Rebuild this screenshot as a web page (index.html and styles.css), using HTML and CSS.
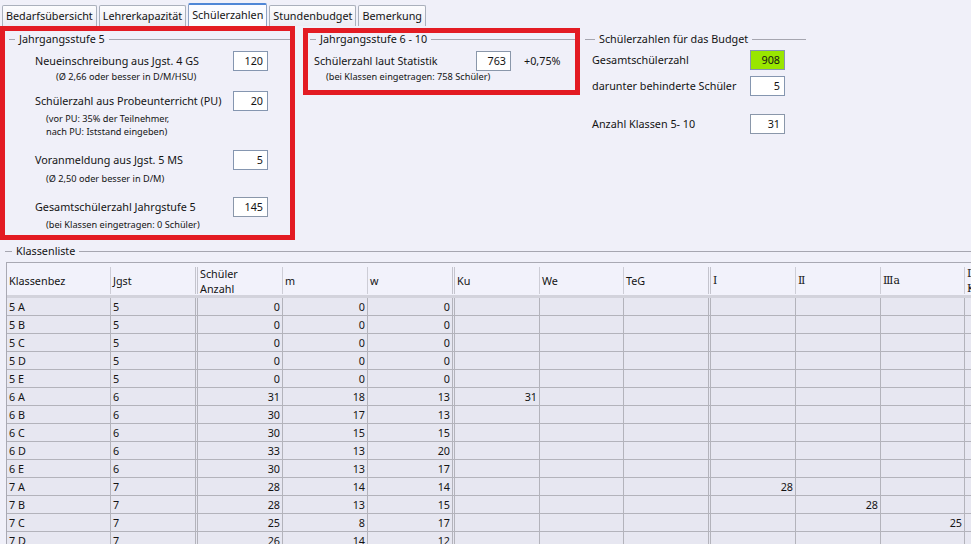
FILE: index.html
```html
<!DOCTYPE html>
<html lang="de">
<head>
<meta charset="utf-8">
<title>Schülerzahlen</title>
<link rel="stylesheet" href="styles.css">
</head>
<body>
<div class="tabs">
  <div class="tab">Bedarfsübersicht</div>
  <div class="tab">Lehrerkapazität</div>
  <div class="tab active">Schülerzahlen</div>
  <div class="tab">Stundenbudget</div>
  <div class="tab">Bemerkung</div>
</div>

<div class="top">
  <section class="redbox box5">
    <div class="legend"><span>Jahrgangsstufe 5</span></div>
    <div class="field g1"><span class="lbl">Neueinschreibung aus Jgst. 4 GS</span><span class="inp">120</span></div>
    <div class="note n1">(Ø 2,66 oder besser in D/M/HSU)</div>
    <div class="field g2"><span class="lbl">Schülerzahl aus Probeunterricht (PU)</span><span class="inp">20</span></div>
    <div class="note n2">(vor PU: 35% der Teilnehmer,<br>nach PU: Iststand eingeben)</div>
    <div class="field g3"><span class="lbl">Voranmeldung aus Jgst. 5 MS</span><span class="inp">5</span></div>
    <div class="note n3">(Ø 2,50 oder besser in D/M)</div>
    <div class="field g4"><span class="lbl">Gesamtschülerzahl Jahrgstufe 5</span><span class="inp ro">145</span></div>
    <div class="note n4">(bei Klassen eingetragen: 0 Schüler)</div>
  </section>

  <section class="redbox box610">
    <div class="legend"><span>Jahrgangsstufe 6 - 10</span></div>
    <div class="field stat"><span class="lbl">Schülerzahl laut Statistik</span><span class="inp ro">763</span><span class="pct">+0,75%</span></div>
    <div class="note n5">(bei Klassen eingetragen: 758 Schüler)</div>
  </section>

  <section class="budget">
    <div class="legend"><span>Schülerzahlen für das Budget</span></div>
    <div class="field b1"><span class="lbl">Gesamtschülerzahl</span><span class="inp green">908</span></div>
    <div class="field b2"><span class="lbl">darunter behinderte Schüler</span><span class="inp">5</span></div>
    <div class="field b3"><span class="lbl">Anzahl Klassen 5- 10</span><span class="inp ro">31</span></div>
  </section>
</div>

<section class="klassen">
  <div class="legend"><span>Klassenliste</span></div>
  <table class="grid">
    <colgroup>
      <col class="w104"><col class="w87"><col class="w85"><col class="w85"><col class="w87"><col class="w85">
      <col class="w84"><col class="w87"><col class="w85"><col class="w85"><col class="w84"><col class="w85">
    </colgroup>
    <thead>
      <tr>
        <th><div class="hc">Klassenbez</div></th>
        <th class="dbl"><div class="hc">Jgst</div></th>
        <th><div class="hc">Schüler<br>Anzahl</div></th>
        <th><div class="hc">m</div></th>
        <th class="dbl"><div class="hc">w</div></th>
        <th><div class="hc">Ku</div></th>
        <th><div class="hc">We</div></th>
        <th class="dbl"><div class="hc">TeG</div></th>
        <th><div class="hc roman">Ⅰ</div></th>
        <th><div class="hc roman">Ⅱ</div></th>
        <th><div class="hc roman">Ⅲa</div></th>
        <th><div class="hc roman">Ⅲb<br>Koop</div></th>
      </tr>
    </thead>
    <tbody>
      <tr><td>5 A</td><td class="dbl">5</td><td class="num">0</td><td class="num">0</td><td class="num dbl">0</td><td></td><td></td><td class="dbl"></td><td></td><td></td><td></td><td></td></tr>
      <tr><td>5 B</td><td class="dbl">5</td><td class="num">0</td><td class="num">0</td><td class="num dbl">0</td><td></td><td></td><td class="dbl"></td><td></td><td></td><td></td><td></td></tr>
      <tr><td>5 C</td><td class="dbl">5</td><td class="num">0</td><td class="num">0</td><td class="num dbl">0</td><td></td><td></td><td class="dbl"></td><td></td><td></td><td></td><td></td></tr>
      <tr><td>5 D</td><td class="dbl">5</td><td class="num">0</td><td class="num">0</td><td class="num dbl">0</td><td></td><td></td><td class="dbl"></td><td></td><td></td><td></td><td></td></tr>
      <tr><td>5 E</td><td class="dbl">5</td><td class="num">0</td><td class="num">0</td><td class="num dbl">0</td><td></td><td></td><td class="dbl"></td><td></td><td></td><td></td><td></td></tr>
      <tr><td>6 A</td><td class="dbl">6</td><td class="num">31</td><td class="num">18</td><td class="num dbl">13</td><td class="num">31</td><td></td><td class="dbl"></td><td></td><td></td><td></td><td></td></tr>
      <tr><td>6 B</td><td class="dbl">6</td><td class="num">30</td><td class="num">17</td><td class="num dbl">13</td><td></td><td></td><td class="dbl"></td><td></td><td></td><td></td><td></td></tr>
      <tr><td>6 C</td><td class="dbl">6</td><td class="num">30</td><td class="num">15</td><td class="num dbl">15</td><td></td><td></td><td class="dbl"></td><td></td><td></td><td></td><td></td></tr>
      <tr><td>6 D</td><td class="dbl">6</td><td class="num">33</td><td class="num">13</td><td class="num dbl">20</td><td></td><td></td><td class="dbl"></td><td></td><td></td><td></td><td></td></tr>
      <tr><td>6 E</td><td class="dbl">6</td><td class="num">30</td><td class="num">13</td><td class="num dbl">17</td><td></td><td></td><td class="dbl"></td><td></td><td></td><td></td><td></td></tr>
      <tr><td>7 A</td><td class="dbl">7</td><td class="num">28</td><td class="num">14</td><td class="num dbl">14</td><td></td><td></td><td class="dbl"></td><td class="num">28</td><td></td><td></td><td></td></tr>
      <tr><td>7 B</td><td class="dbl">7</td><td class="num">28</td><td class="num">13</td><td class="num dbl">15</td><td></td><td></td><td class="dbl"></td><td></td><td class="num">28</td><td></td><td></td></tr>
      <tr><td>7 C</td><td class="dbl">7</td><td class="num">25</td><td class="num">8</td><td class="num dbl">17</td><td></td><td></td><td class="dbl"></td><td></td><td></td><td class="num">25</td><td></td></tr>
      <tr><td>7 D</td><td class="dbl">7</td><td class="num">26</td><td class="num">14</td><td class="num dbl">12</td><td></td><td></td><td class="dbl"></td><td></td><td></td><td></td><td></td></tr>
    </tbody>
  </table>
</section>
</body>
</html>
```

FILE: styles.css
```css
* { box-sizing: border-box; }

html, body {
  margin: 0;
  width: 971px;
  height: 544px;
  overflow: hidden;
}

body {
  background: #f0f0f9;
  color: #141414;
  font-family: "Noto Sans", "Open Sans", sans-serif;
  font-size: 10.8px;
  line-height: 14px;
}

/* ---------- tabs ---------- */
.tabs {
  display: flex;
  align-items: flex-end;
  gap: 2px;
  height: 26px;
  padding-left: 2px;
}

.tab {
  height: 21px;
  padding: 0 3px;
  display: flex;
  align-items: center;
  border: 1px solid #aab0bc;
  border-bottom: none;
  border-radius: 2px 2px 0 0;
  background: linear-gradient(#fcfcfe, #ececf4);
  white-space: nowrap;
}

.tab.active {
  height: 23px;
  padding-bottom: 2px;
  background: #fbfbff;
  border-color: #8fa3c4;
  border-top: 2px solid #4f86d6;
}

/* ---------- shared ---------- */
.legend {
  display: flex;
  align-items: center;
  gap: 4px;
  height: 14px;
  white-space: nowrap;
}

.legend::before,
.legend::after {
  content: "";
  height: 1px;
  background: #a6a6b0;
}

.legend::before { width: 6px; }
.legend::after { flex: 1; }

.field {
  display: flex;
  align-items: center;
}

.lbl { white-space: nowrap; }

.inp {
  width: 35px;
  height: 20px;
  border: 1px solid #8596b0;
  background: #ffffff;
  text-align: right;
  padding-right: 4px;
  line-height: 18px;
  flex: none;
}

.inp.ro { border-color: #8a97aa; }
.inp.green { background: #99e600; }

.note {
  font-size: 9.2px;
  line-height: 12px;
  white-space: nowrap;
}

.top {
  display: flex;
  align-items: flex-start;
}

.redbox {
  border: 5px solid #e31b23;
}

/* ---------- Jahrgangsstufe 5 ---------- */
.box5 {
  width: 295px;
  height: 214px;
}

.box5 .legend {
  margin-top: 1px;
  padding-left: 4px;
}

.box5 .field {
  padding-left: 30px;
  padding-right: 22px;
}

.box5 .inp { margin-left: auto; }

.g1 { margin-top: 5px; }
.g2 { margin-top: 8px; }
.g3 { margin-top: 12px; }
.g4 { margin-top: 12px; }

.n1 { padding-left: 51px; }
.n2 { padding-left: 41px; margin-top: 1px; line-height: 13px; }
.n3 { padding-left: 41px; margin-top: 3px; }
.n4 { padding-left: 41px; margin-top: 2px; }

/* ---------- Jahrgangsstufe 6 - 10 ---------- */
.box610 {
  width: 277px;
  height: 67px;
  margin-left: 8px;
  margin-top: 2px;
}

.box610 .legend {
  height: 12px;
  padding-left: 2px;
}

.stat {
  margin-top: 6px;
  padding-left: 6px;
}

.stat .lbl { width: 162px; }
.stat .pct { margin-left: 13px; }

.n5 { padding-left: 18px; }

/* ---------- Budget ---------- */
.budget {
  width: 221px;
  margin-left: 5px;
}

.budget .legend { margin-top: 6px; }
.budget .legend::before { width: 10px; }

.budget .field {
  padding-left: 7px;
  padding-right: 21px;
}

.budget .inp { margin-left: auto; }

.b1 { margin-top: 4px; }
.b2 { margin-top: 6px; }
.b3 { margin-top: 18px; }

/* ---------- Klassenliste ---------- */
.klassen {
  margin-left: 5px;
}

.klassen .legend {
  margin-top: 4px;
}

.klassen .legend::before { width: 7px; }

.grid {
  margin-top: 4px;
  margin-left: 1px;
  table-layout: fixed;
  border-collapse: separate;
  border-spacing: 0;
  border-top: 1px solid #a9a9b3;
  border-left: 1px solid #a9a9b3;
  width: 1036px;
}

.w104 { width: 104px; }
.w87 { width: 87px; }
.w85 { width: 85px; }
.w84 { width: 84px; }

.grid th {
  padding: 4px 0 1px;
  height: 35px;
  font-weight: normal;
  text-align: left;
  background: #f2f2fb;
  border-bottom: 3px solid #d3d3dc;
  vertical-align: top;
}

.hc {
  height: 27px;
  display: flex;
  align-items: center;
  padding-left: 2px;
  border-right: 1px solid #cdcdd6;
  line-height: 15px;
  white-space: nowrap;
  overflow: hidden;
}

.grid th.dbl .hc { border-right: 3px double #c4c4cd; }

.roman { font-family: "DejaVu Serif", "Liberation Serif", serif; }

.grid td {
  height: 18px;
  padding: 0 2px;
  line-height: 17px;
  background: #e7e7f1;
  border-right: 1px solid #b3b3bb;
  border-bottom: 1px solid #b3b3bb;
  white-space: nowrap;
}

.grid td.dbl { border-right: 3px double #b3b3bb; }
.grid td.num { text-align: right; }
```
